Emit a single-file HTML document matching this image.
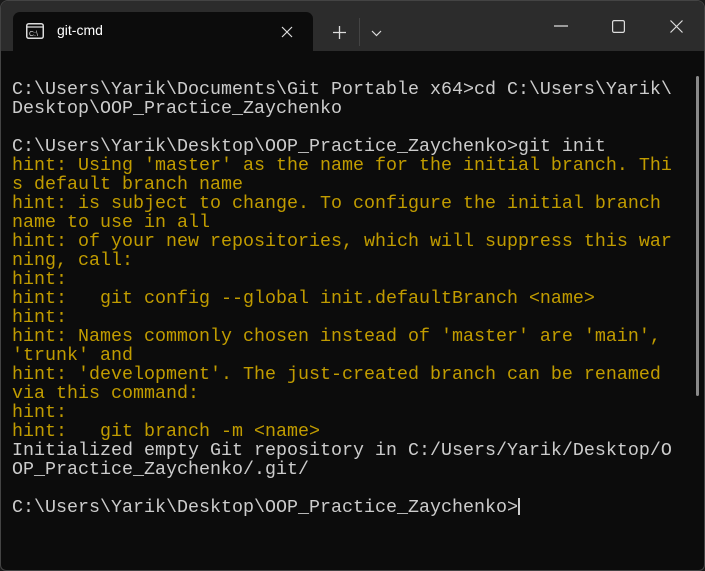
<!DOCTYPE html>
<html><head><style>
html,body{margin:0;padding:0;background:#1a1a1a;width:705px;height:571px;overflow:hidden}
.win{position:absolute;left:0;top:0;width:703px;height:569px;background:#0c0c0c;border:1px solid #444;border-radius:8px 8px 6px 6px;overflow:hidden}
.title{position:absolute;left:0;top:0;width:703px;height:50px;background:#2c2c2c}
.tab{position:absolute;left:12px;top:11px;width:300px;height:39px;background:#0c0c0c;border-radius:7px 7px 0 0}
.tab .t{position:absolute;left:44px;top:10px;color:#fff;font:14px "Liberation Sans",sans-serif}
.term{position:absolute;left:11px;top:79px;font:18.33px/19px "Liberation Mono",monospace;color:#cccccc;white-space:pre;margin:0}
.y{color:#c19c00}
.sb{position:absolute;left:695px;top:75px;width:3px;height:320px;background:#8a8a8a;border-radius:2px}
svg{position:absolute}
</style></head><body>
<div class="win">
<div class="title"></div>
<div class="tab">
<svg style="left:13px;top:11px" width="18" height="16" viewBox="0 0 18 16"><rect x="0.75" y="0.75" width="16.5" height="14.5" rx="2" fill="none" stroke="#ddd" stroke-width="1.5"/><line x1="1" y1="4" x2="17" y2="4" stroke="#ddd" stroke-width="1.2"/><text x="3" y="13" font-size="7" fill="#ddd" font-family="Liberation Sans">C:\</text></svg>
<span class="t">git-cmd</span>
<svg style="left:268px;top:14px" width="12" height="12"><path d="M1 1L11 11M11 1L1 11" stroke="#ddd" stroke-width="1.2"/></svg>
</div>
<svg style="left:332px;top:25px" width="13" height="13"><path d="M6.5 0V13M0 6.5H13" stroke="#ddd" stroke-width="1.3"/></svg>
<div style="position:absolute;left:358px;top:17px;width:1px;height:28px;background:#444"></div>
<svg style="left:370px;top:29px" width="11" height="7"><path d="M1 1L5.5 5.5L10 1" stroke="#ddd" stroke-width="1.2" fill="none"/></svg>
<svg style="left:553px;top:24px" width="14" height="2"><path d="M0 1H14" stroke="#ddd" stroke-width="1.2"/></svg>
<svg style="left:611px;top:19px" width="13" height="13"><rect x="0.6" y="0.6" width="11.8" height="11.8" rx="1.5" fill="none" stroke="#ddd" stroke-width="1.2"/></svg>
<svg style="left:669px;top:19px" width="13" height="13"><path d="M0.5 0.5L12.5 12.5M12.5 0.5L0.5 12.5" stroke="#ddd" stroke-width="1.2"/></svg>
<pre class="term">C:\Users\Yarik\Documents\Git Portable x64>cd C:\Users\Yarik\
Desktop\OOP_Practice_Zaychenko

C:\Users\Yarik\Desktop\OOP_Practice_Zaychenko>git init
<span class="y">hint: Using 'master' as the name for the initial branch. Thi
s default branch name
hint: is subject to change. To configure the initial branch
name to use in all
hint: of your new repositories, which will suppress this war
ning, call:
hint:
hint:   git config --global init.defaultBranch &lt;name&gt;
hint:
hint: Names commonly chosen instead of 'master' are 'main',
'trunk' and
hint: 'development'. The just-created branch can be renamed
via this command:
hint:
hint:   git branch -m &lt;name&gt;</span>
Initialized empty Git repository in C:/Users/Yarik/Desktop/O
OP_Practice_Zaychenko/.git/

C:\Users\Yarik\Desktop\OOP_Practice_Zaychenko><span style="display:inline-block;width:2px;height:17px;background:#ccc;vertical-align:-3px"></span></pre>
<div class="sb"></div>
</div>
</body></html>
